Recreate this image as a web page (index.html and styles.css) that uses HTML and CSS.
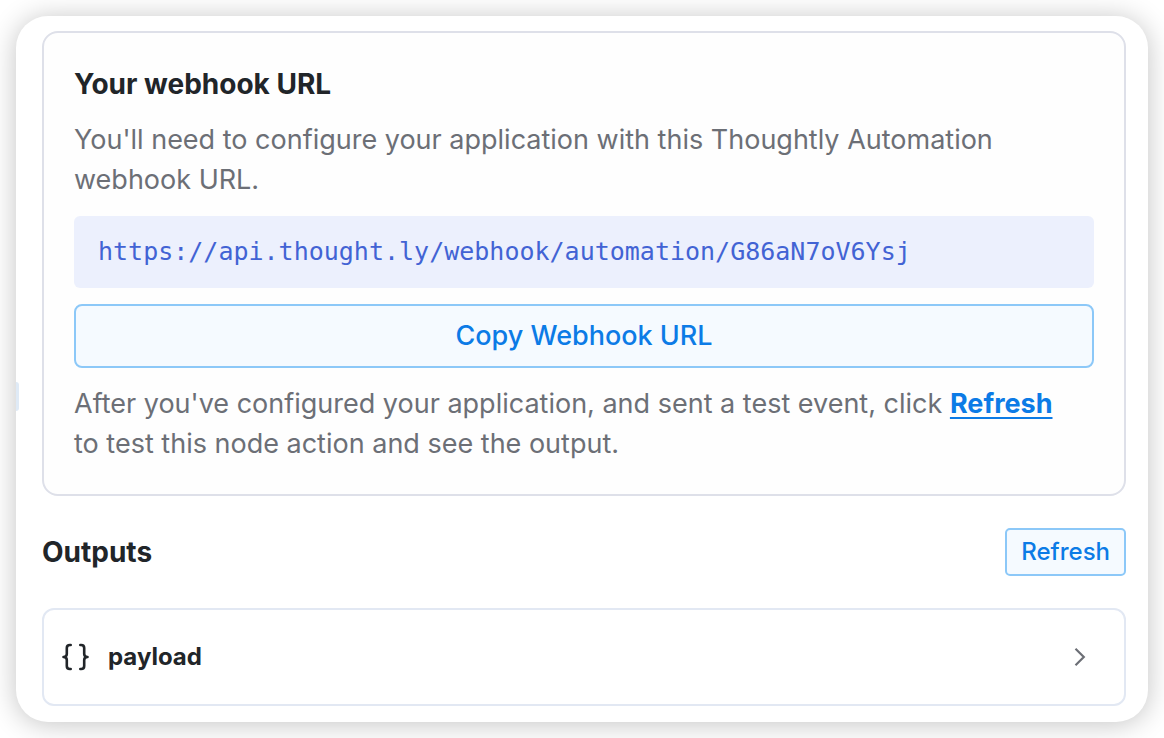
FILE: index.html
```html
<!DOCTYPE html>
<html lang="en">
<head>
<meta charset="utf-8">
<meta name="viewport" content="width=device-width, initial-scale=1">
<title>Webhook</title>
<link rel="stylesheet" href="styles.css">
</head>
<body>
<main class="panel">
  <span class="handle" aria-hidden="true"></span>
  <section class="card">
    <h2 class="title">Your webhook URL</h2>
    <p class="text">You'll need to configure your application with this Thoughtly Automation webhook URL.</p>
    <code class="url">https://api.thought.ly/webhook/automation/G86aN7oV6Ysj</code>
    <button class="button" type="button">Copy Webhook URL</button>
    <p class="text">After you've configured your application, and sent a test event, click <a class="link" href="#outputs">Refresh</a> to test this node action and see the output.</p>
  </section>
  <section class="outputs" id="outputs">
    <header class="outputs-header">
      <h2 class="title">Outputs</h2>
      <button class="button button-small" type="button">Refresh</button>
    </header>
    <button class="output" type="button">
      <svg class="braces" viewBox="0 0 28 28" fill="none" stroke="currentColor" stroke-width="2.6" stroke-linecap="round" stroke-linejoin="round" aria-hidden="true">
        <path d="M8.7 2H7.8Q4.8 2 4.8 5V11Q4.8 14 1.5 14Q4.8 14 4.8 17V23Q4.8 26 7.8 26H8.7M18.3 2H19.2Q22.2 2 22.2 5V11Q22.2 14 25.5 14Q22.2 14 22.2 17V23Q22.2 26 19.2 26H18.3"/>
      </svg>
      <span class="output-name">payload</span>
      <svg class="chevron" viewBox="0 0 12 20" fill="none" stroke="currentColor" stroke-width="2.2" aria-hidden="true">
        <path d="M1.5 1.8L9.8 10L1.5 18.2"/>
      </svg>
    </button>
  </section>
</main>
</body>
</html>
```
FILE: styles.css
```css
* {
  box-sizing: border-box;
}

body {
  margin: 0;
  padding: 16px;
  background: #fff;
  color: #212529;
  font-family: Inter, "Liberation Sans", sans-serif;
  font-size: 27px;
  line-height: 40px;
}

.panel {
  position: relative;
  display: flex;
  flex-direction: column;
  gap: 32px;
  padding: 15px 22px 16px 26px;
  border-radius: 32px;
  background: #fff;
  box-shadow: 0 2px 28px rgba(0, 0, 0, 0.24);
}

.handle {
  position: absolute;
  left: 0;
  top: 366px;
  width: 3px;
  height: 29px;
  border-radius: 0 4px 4px 0;
  background: #dfeaf6;
}

.card {
  display: flex;
  flex-direction: column;
  gap: 16px;
  padding: 31px 30px 30px;
  border: 2px solid #dee0e9;
  border-radius: 16px;
  background: #fefefe;
}

.title,
.text {
  margin: 0;
}

.title {
  font-size: 28px;
  font-weight: 700;
}

.text {
  padding-right: 16px;
  color: #6c6f76;
}

.url {
  padding: 16px 24px;
  border-radius: 6px;
  background: #ecf0fd;
  color: #4263d4;
  font-family: "DejaVu Sans Mono", monospace;
  font-size: 25px;
  overflow-wrap: anywhere;
}

.button {
  padding: 10px 14px;
  border: 2px solid #8cc8f8;
  border-radius: 8px;
  background: #f5faff;
  color: #0c7be6;
  font: inherit;
  font-weight: 500;
}

.button-small {
  padding: 2px 14px;
  border-radius: 5px;
  font-size: 24px;
}

.link {
  color: #0c7be6;
  font-weight: 700;
  text-decoration-thickness: 2px;
  text-underline-offset: 4px;
}

.outputs {
  display: flex;
  flex-direction: column;
  gap: 32px;
}

.outputs-header {
  display: flex;
  align-items: center;
  justify-content: space-between;
}

.output {
  display: flex;
  align-items: center;
  gap: 18px;
  padding: 27px 38px 27px 18px;
  border: 2px solid #e2e8f3;
  border-radius: 12px;
  background: #fff;
  color: #212529;
  font: inherit;
  font-size: 24px;
  text-align: left;
}

.output-name {
  flex: 1;
  font-weight: 700;
}

.braces {
  width: 28px;
  height: 28px;
}

.chevron {
  width: 12px;
  height: 20px;
  color: #6c6f76;
}
```
